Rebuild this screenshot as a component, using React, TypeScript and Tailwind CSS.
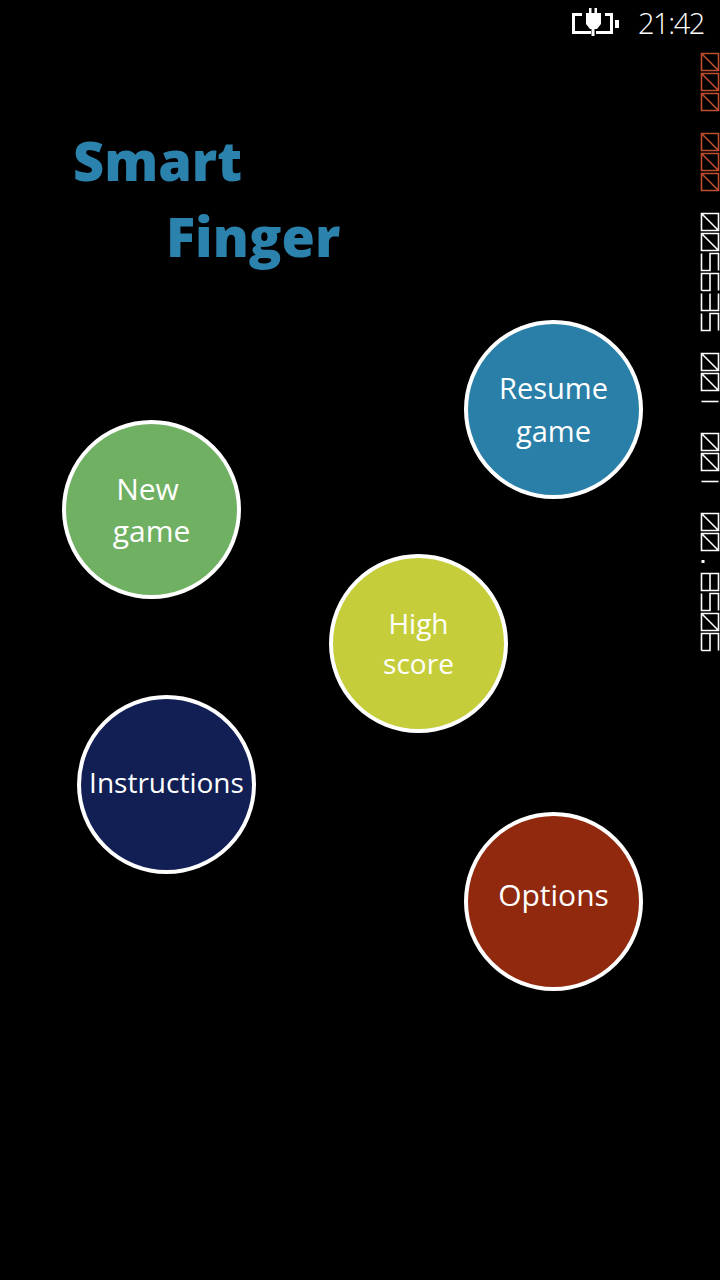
const font = "font-['Open_Sans','Noto_Sans',sans-serif]"

const buttons = [
  { lines: ['New', 'game'], pos: 'left-[62px] top-[420px]', bg: 'bg-[#70b062]', text: 'text-[30px] leading-[42px]' },
  { lines: ['Resume', 'game'], pos: 'left-[464px] top-[320px]', bg: 'bg-[#2a7fa9]', text: 'text-[29px] leading-[43px] pb-[2px]' },
  { lines: ['High', 'score'], pos: 'left-[329px] top-[554px]', bg: 'bg-[#c5ce3a]', text: 'text-[28px] leading-[40px] pb-[2px]' },
  { lines: ['Instructions'], pos: 'left-[77px] top-[695px]', bg: 'bg-[#111f54]', text: 'text-[28px] leading-[40px] pb-[6px]' },
  { lines: ['Options'], pos: 'left-[464px] top-[812px]', bg: 'bg-[#90290d]', text: 'text-[30px] leading-[42px] pb-[14px]' },
]

// tofu glyphs down the right edge, one every 20px
type Glyph = 'box' | 's' | 'w' | 'h' | 'b' | 'line' | 'dot' | 'gap'

const glyphRows: { glyph: Glyph; red?: boolean }[] = [
  { glyph: 'box', red: true }, { glyph: 'box', red: true }, { glyph: 'box', red: true }, { glyph: 'gap' },
  { glyph: 'box', red: true }, { glyph: 'box', red: true }, { glyph: 'box', red: true }, { glyph: 'gap' },
  { glyph: 'box' }, { glyph: 'box' }, { glyph: 's' }, { glyph: 'b' }, { glyph: 'w' }, { glyph: 's' }, { glyph: 'gap' },
  { glyph: 'box' }, { glyph: 'box' }, { glyph: 'line' }, { glyph: 'gap' },
  { glyph: 'box' }, { glyph: 'box' }, { glyph: 'line' }, { glyph: 'gap' },
  { glyph: 'box' }, { glyph: 'box' }, { glyph: 'dot' }, { glyph: 'h' }, { glyph: 's' }, { glyph: 'box' }, { glyph: 'b' },
]

const glyphPaths: Record<Glyph, string> = {
  box: 'M1.5 1.5H18.5V18.5H1.5ZM1.5 1.5L18.5 18.5',
  s: 'M1.5 1.5V18.5H10V1.5H18.5V18.5',
  b: 'M1.5 18.5V1.5H18.5V18.5M10 1.5V18.5H1.5',
  w: 'M1.5 1.5V18.5H18.5V1.5M10 1.5V18.5',
  h: 'M1.5 1.5H18.5V18.5H1.5ZM10 1.5V18.5',
  line: 'M1.5 9.5H18.5',
  dot: 'M1.5 9.5H4.5',
  gap: '',
}

function Tofu({ glyph, red }: { glyph: Glyph; red?: boolean }) {
  return (
    <svg width="20" height="20" viewBox="0 0 20 20" fill="none" className="block" stroke={red ? '#c04e2e' : '#ffffff'} strokeWidth={glyph === 'dot' ? 3 : 1.6}>
      <path d={glyphPaths[glyph]} />
    </svg>
  )
}

function BatteryIcon() {
  return (
    <svg width="50" height="30" viewBox="0 0 50 30" className="block">
      <path d="M11 7.5H2.5V25.5H20M25 25.5H40.5V7.5H34" fill="none" stroke="#fff" strokeWidth="3" />
      <rect x="44" y="13" width="4" height="8" fill="#fff" />
      <path d="M15 6H18V1H20.5V6H23.5V1H26V6H30V17L26 22H23.5V29H20.5V22H19L15 17Z" fill="#fff" />
    </svg>
  )
}

export default function App() {
  return (
    <div className={`relative w-[720px] h-[1280px] bg-black overflow-hidden ${font}`}>
      {/* Status bar */}
      <div className="flex items-center justify-end h-[44px] pr-4">
        <div className="mr-[17px]"><BatteryIcon /></div>
        <span className="text-[29px] tracking-[-1.4px] font-light text-white leading-none">21:42</span>
      </div>

      {/* Title */}
      <h1 className="mt-[78px] ml-[73px] text-[#2a82ad] text-[54px] font-extrabold leading-[76px]">
        <div>Smart</div>
        <div className="ml-[93px]">Finger</div>
      </h1>

      {/* Menu circles */}
      {buttons.map(({ lines, pos, bg, text }) => (
        <button key={lines[0]} className={`absolute ${pos} ${bg} w-[179px] h-[179px] rounded-full border-[4.5px] border-white flex flex-col items-center justify-center text-white ${text}`}>
          {lines.map((line) => (
            <span key={line} className={line === 'New' ? 'pr-2' : ''}>{line}</span>
          ))}
        </button>
      ))}

      {/* Missing-font glyphs */}
      <div className="absolute left-[700px] top-[52px] flex flex-col">
        {glyphRows.map(({ glyph, red }, i) => (
          <Tofu key={i} glyph={glyph} red={red} />
        ))}
      </div>
    </div>
  )
}
